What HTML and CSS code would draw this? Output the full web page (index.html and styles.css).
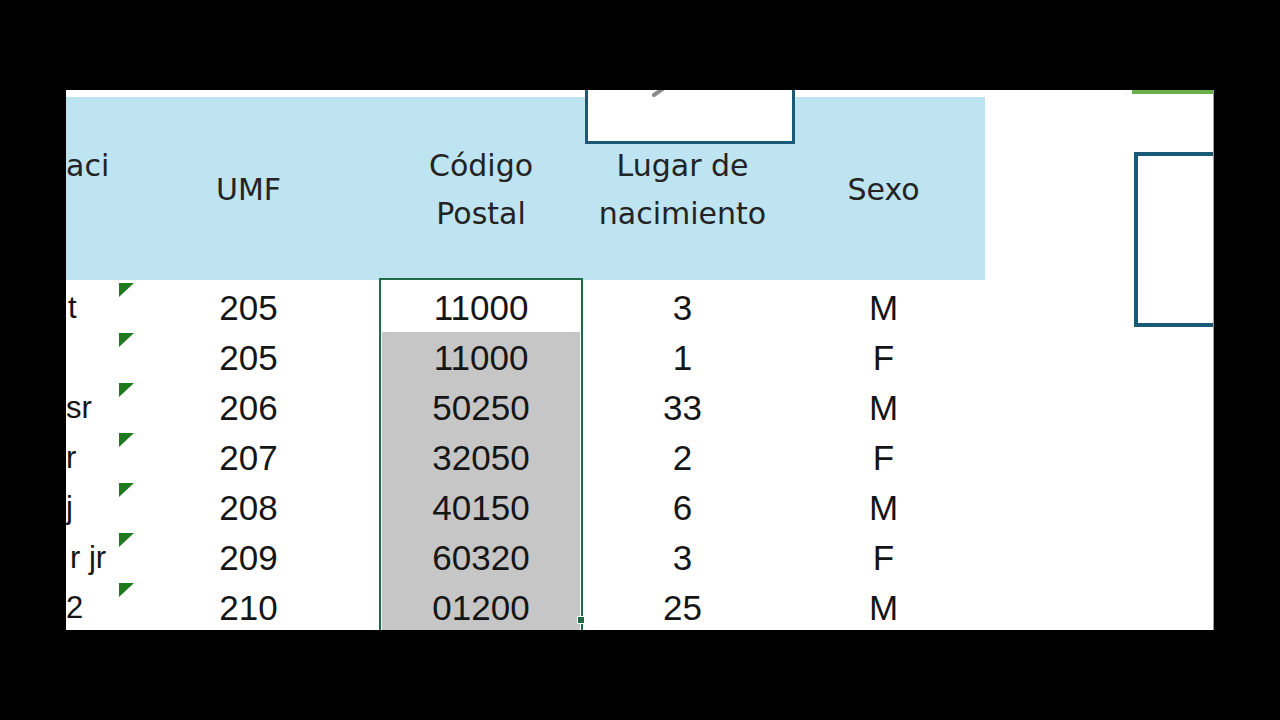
FILE: index.html
```html
<!DOCTYPE html>
<html lang="es">
<head>
<meta charset="utf-8">
<title>Hoja</title>
<link rel="stylesheet" href="styles.css">
</head>
<body>
<div class="screen">
  <div class="sheet">
    <div class="grid">
      <div class="hcell hfirst"><span class="hline">aci</span><span class="hline">&nbsp;</span></div>
      <div class="hcell"><span class="hline">UMF</span></div>
      <div class="hcell"><span class="hline">Código</span><span class="hline">Postal</span></div>
      <div class="hcell"><span class="hline">Lugar de</span><span class="hline">nacimiento</span></div>
      <div class="hcell"><span class="hline">Sexo</span></div>

      <div class="cell first"><span class="frag f1">t</span></div>
      <div class="cell umf">205</div>
      <div class="cell">11000</div>
      <div class="cell">3</div>
      <div class="cell">M</div>

      <div class="cell first"></div>
      <div class="cell umf">205</div>
      <div class="cell sel">11000</div>
      <div class="cell">1</div>
      <div class="cell">F</div>

      <div class="cell first"><span class="frag f3">sr</span></div>
      <div class="cell umf">206</div>
      <div class="cell sel">50250</div>
      <div class="cell">33</div>
      <div class="cell">M</div>

      <div class="cell first"><span class="frag f4">r</span></div>
      <div class="cell umf">207</div>
      <div class="cell sel">32050</div>
      <div class="cell">2</div>
      <div class="cell">F</div>

      <div class="cell first"><span class="frag f5">j</span></div>
      <div class="cell umf">208</div>
      <div class="cell sel">40150</div>
      <div class="cell">6</div>
      <div class="cell">M</div>

      <div class="cell first"><span class="frag f6">r jr</span></div>
      <div class="cell umf">209</div>
      <div class="cell sel">60320</div>
      <div class="cell">3</div>
      <div class="cell">F</div>

      <div class="cell first"><span class="frag f7">2</span></div>
      <div class="cell umf">210</div>
      <div class="cell sel">01200</div>
      <div class="cell">25</div>
      <div class="cell">M</div>
    </div>

    <div class="selection"><span class="handle"></span></div>

    <div class="shape-top">
      <svg class="stroke" width="60" height="20" viewBox="0 0 60 20">
        <path d="M4 14 L14 7" stroke="#8a8a8a" stroke-width="4" stroke-linecap="round" fill="none"/>
        <circle cx="38" cy="1" r="2" fill="#9a9a9a"/>
      </svg>
    </div>
    <div class="shape-right"></div>
    <div class="green-bar"></div>
  </div>
</div>
</body>
</html>
```

FILE: styles.css
```css
html, body {
  margin: 0;
  padding: 0;
  background: #000;
}

.screen {
  width: 1280px;
  height: 720px;
  background: #000;
  padding: 90px 0 0 66px;
  box-sizing: border-box;
}

.sheet {
  position: relative;
  width: 1148px;
  height: 540px;
  background: #fff;
  overflow: hidden;
  padding-top: 7px;
  box-sizing: border-box;
  border-right: 1px solid #9a9a9a;
}

.grid {
  display: grid;
  grid-template-columns: 52px 261px 204px 199px 203px;
  grid-template-rows: 185px repeat(7, 50px);
}

.hcell {
  background: #bee4f1;
  display: flex;
  flex-direction: column;
  justify-content: center;
  align-items: center;
  font-family: "DejaVu Sans", sans-serif;
  font-size: 30px;
  color: #232323;
  line-height: 48px;
  margin-bottom: 2px;
  padding-top: 2px;
  box-sizing: border-box;
}

.hfirst {
  align-items: flex-start;
  overflow: hidden;
}

.hline {
  display: block;
  white-space: nowrap;
}

.cell {
  display: flex;
  align-items: center;
  justify-content: center;
  font-family: "Liberation Sans", Arial, sans-serif;
  font-size: 35px;
  color: #151515;
  line-height: 50px;
  position: relative;
  padding-top: 1px;
  box-sizing: border-box;
}

.first {
  justify-content: flex-start;
  overflow: hidden;
  font-size: 31px;
}

.frag {
  white-space: nowrap;
  display: block;
}

.f1 { margin-left: 2px; }
.f3 { margin-left: 0; }
.f4 { margin-left: 0; }
.f5 { margin-left: 0; }
.f6 { margin-left: 4px; }
.f7 { margin-left: 0; }

.umf::before {
  content: "";
  position: absolute;
  left: 1px;
  top: 1px;
  width: 15px;
  height: 14px;
  background: #1d7a1d;
  clip-path: polygon(0 0, 100% 0, 0 100%);
}

.sel {
  background: #c6c6c6;
  margin: 0 3px;
}

.selection {
  position: absolute;
  left: 313px;
  top: 188px;
  width: 204px;
  height: 370px;
  border: 2px solid #1e6c46;
  box-sizing: border-box;
}

.handle {
  position: absolute;
  right: -4px;
  top: 336px;
  width: 6px;
  height: 6px;
  background: #1e6c46;
  border: 1px solid #fff;
}

.shape-top {
  position: absolute;
  left: 519px;
  top: -12px;
  width: 210px;
  height: 66px;
  border: 3px solid #1b5a76;
  background: #fff;
  box-sizing: border-box;
}

.stroke {
  position: absolute;
  left: 62px;
  top: 0;
}

.shape-right {
  position: absolute;
  left: 1068px;
  top: 62px;
  width: 120px;
  height: 175px;
  border: 4px solid #1b5a76;
  background: #fff;
  box-sizing: border-box;
}

.green-bar {
  position: absolute;
  left: 1066px;
  top: 0;
  width: 90px;
  height: 4px;
  background: #6ab04a;
}
```
